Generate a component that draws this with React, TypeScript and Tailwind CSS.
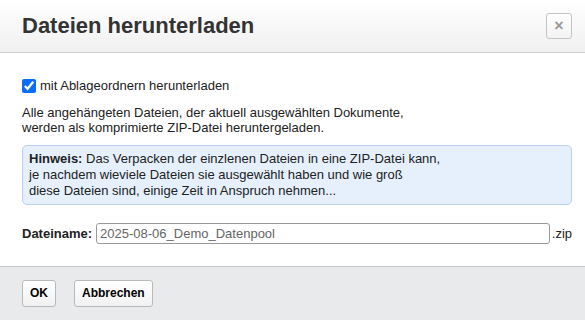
export default function App() {
  return (
    <div className="w-[585px] h-[320px] bg-white flex flex-col overflow-hidden font-['Liberation_Sans',Arial,sans-serif] text-[13px] leading-[15px] text-[#222]">
      <header className="h-[53px] shrink-0 flex items-center justify-between pl-[22px] pr-[13px] border-b border-[#cdcdcd] bg-gradient-to-b from-white to-[#f0f0f0]">
        <h1 className="text-[22px] leading-[26px] font-bold text-[#333]">Dateien herunterladen</h1>
        <button
          type="button"
          className="w-[26px] h-[26px] flex items-center justify-center rounded-[3px] border border-[#c4c4c4] bg-gradient-to-b from-white to-[#f3f3f3] text-[#9a9a9a] text-[16px] font-bold leading-none"
        >
          ×
        </button>
      </header>

      <div className="flex-1 pl-[22px] pr-[13px] pt-[25px]">
        <label className="flex items-center gap-[4px] h-[15px]">
          <input type="checkbox" defaultChecked className="w-[14px] h-[14px] accent-[#0b6cf5]" />
          <span>mit Ablageordnern herunterladen</span>
        </label>

        <p className="mt-[12px]">
          Alle angehängeten Dateien, der aktuell ausgewählten Dokumente,
          <br />
          werden als komprimierte ZIP-Datei heruntergeladen.
        </p>

        <div className="mt-[10px] rounded-[5px] border border-[#b9d1ef] bg-[#e5f0fc] px-[6px] py-[5px] leading-[16px]">
          <b>Hinweis:</b> Das Verpacken der einzlenen Dateien in eine ZIP-Datei kann,
          <br />
          je nachdem wieviele Dateien sie ausgewählt haben und wie groß
          <br />
          diese Dateien sind, einige Zeit in Anspruch nehmen...
        </div>

        <div className="mt-[18px] flex items-center">
          <span className="font-bold mr-[4px]">Dateiname:</span>
          <input
            type="text"
            defaultValue="2025-08-06_Demo_Datenpool"
            className="flex-1 h-[21px] rounded-[3px] border border-[#9a9a9a] px-[3px] text-[13px] text-[#666] outline-none"
          />
          <span className="ml-[2px]">.zip</span>
        </div>
      </div>

      <footer className="h-[54px] shrink-0 border-t border-[#c8c8c8] bg-[#e9eaec] flex items-center gap-[18px] px-[22px]">
        <button
          type="button"
          className="h-[27px] px-[7px] rounded-[3px] border border-[#b9b9b9] bg-gradient-to-b from-white to-[#f1f1f1] text-[12px] font-bold text-black"
        >
          OK
        </button>
        <button
          type="button"
          className="h-[27px] px-[7px] rounded-[3px] border border-[#b9b9b9] bg-gradient-to-b from-white to-[#f1f1f1] text-[12px] font-bold text-black"
        >
          Abbrechen
        </button>
      </footer>
    </div>
  );
}
